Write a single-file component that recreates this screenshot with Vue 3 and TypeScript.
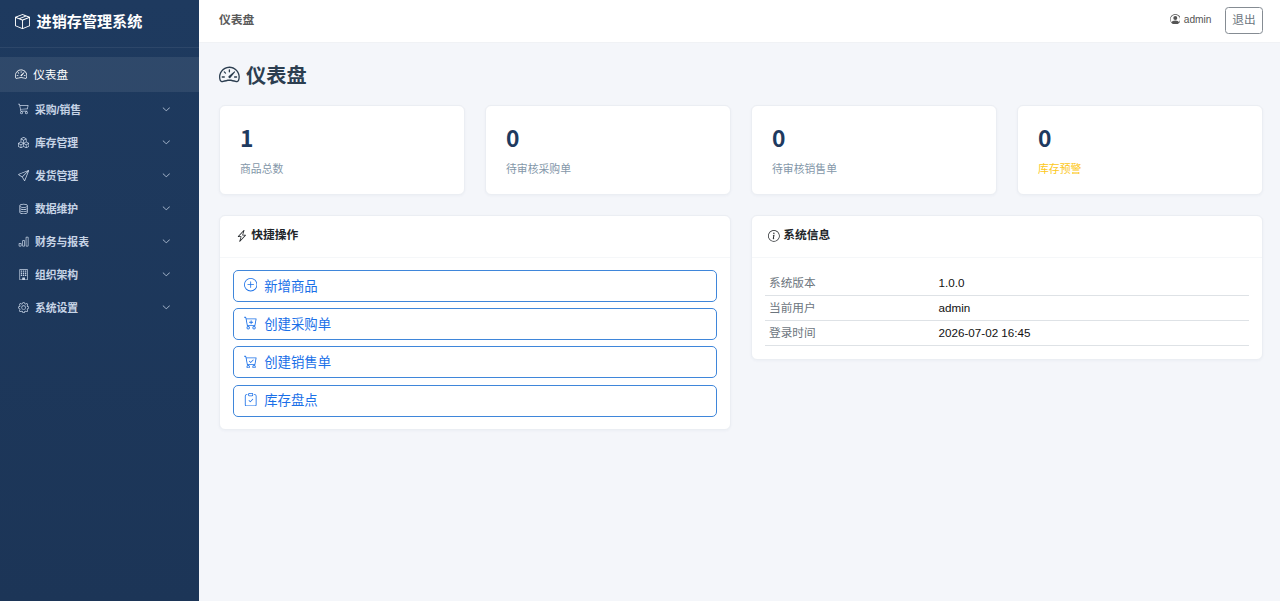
<script setup lang="ts">
interface NavGroup {
  label: string
  icon: string
}

const circle = 'M8 15A7 7 0 1 1 8 1a7 7 0 0 1 0 14m0 1A8 8 0 1 0 8 0a8 8 0 0 0 0 16'
const cartBody =
  'M.5 1a.5.5 0 0 0 0 1h1.11l.401 1.607 1.498 7.985A.5.5 0 0 0 4 12h1a2 2 0 1 0 0 4 2 2 0 0 0 0-4h7a2 2 0 1 0 0 4 2 2 0 0 0 0-4h1a.5.5 0 0 0 .491-.408l1.5-8A.5.5 0 0 0 14.5 3H2.89l-.405-1.621A.5.5 0 0 0 2 1zm3.915 10L3.102 4h10.796l-1.313 7zM6 14a1 1 0 1 1-2 0 1 1 0 0 1 2 0m7 0a1 1 0 1 1-2 0 1 1 0 0 1 2 0'

const windowPane = (x: number, y: number): string =>
  `M${x} ${y + 0.5}a.5.5 0 0 1 .5-.5h1a.5.5 0 0 1 .5.5v1a.5.5 0 0 1-.5.5h-1a.5.5 0 0 1-.5-.5z`
const windowPanes: string = [2, 5, 8]
  .map((y) => [4, 7, 10].map((x) => windowPane(x, y)).join(''))
  .join('')

const icons: Record<string, string[]> = {
  box: [
    'M8.186 1.113a.5.5 0 0 0-.372 0L1.846 3.5l2.404.961L10.404 2zm3.564 1.426L5.596 5 8 5.961 14.154 3.5zm3.25 1.7-6.5 2.6v7.922l6.5-2.6V4.24zM7.5 14.762V6.838L1 4.239v7.923zM7.443.184a1.5 1.5 0 0 1 1.114 0l7.129 2.852A.5.5 0 0 1 16 3.5v8.662a1 1 0 0 1-.629.928l-7.185 2.874a.5.5 0 0 1-.372 0L.63 13.09a1 1 0 0 1-.63-.928V3.5a.5.5 0 0 1 .314-.464z',
  ],
  speedometer: [
    'M8 4a.5.5 0 0 1 .5.5V6a.5.5 0 0 1-1 0V4.5A.5.5 0 0 1 8 4M3.732 5.732a.5.5 0 0 1 .707 0l.915.914a.5.5 0 1 1-.708.708l-.914-.915a.5.5 0 0 1 0-.707M2 10a.5.5 0 0 1 .5-.5h1.586a.5.5 0 0 1 0 1H2.5A.5.5 0 0 1 2 10m9.5 0a.5.5 0 0 1 .5-.5h1.5a.5.5 0 0 1 0 1H12a.5.5 0 0 1-.5-.5m.754-4.246a.39.39 0 0 0-.527-.02L7.547 9.31a.91.91 0 1 0 1.302 1.258l3.434-4.297a.39.39 0 0 0-.029-.518z',
    'M0 10a8 8 0 1 1 15.547 2.661c-.442 1.253-1.845 1.602-2.932 1.25C11.309 13.488 9.475 13 8 13c-1.474 0-3.31.488-4.615.911-1.087.352-2.49.003-2.932-1.25A8 8 0 0 1 0 10m8-7a7 7 0 0 0-6.603 9.329c.203.575.923.876 1.68.63C4.397 12.533 6.358 12 8 12s3.604.532 4.923.96c.757.245 1.477-.056 1.68-.631A7 7 0 0 0 8 3',
  ],
  cart: [
    'M0 1.5A.5.5 0 0 1 .5 1H2a.5.5 0 0 1 .485.379L2.89 3H14.5a.5.5 0 0 1 .49.598l-1 5a.5.5 0 0 1-.465.401l-9.397.472L4.415 11H13a.5.5 0 0 1 0 1H4a.5.5 0 0 1-.491-.408L2.01 3.607 1.61 2H.5a.5.5 0 0 1-.5-.5M3.102 4l.84 4.479 9.144-.459L13.89 4zM5 12a2 2 0 1 0 0 4 2 2 0 0 0 0-4m7 0a2 2 0 1 0 0 4 2 2 0 0 0 0-4m-7 1a1 1 0 1 1 0 2 1 1 0 0 1 0-2m7 0a1 1 0 1 1 0 2 1 1 0 0 1 0-2',
  ],
  boxes: [
    'M7.752.066a.5.5 0 0 1 .496 0l3.75 2.143a.5.5 0 0 1 .252.434v3.995l3.498 2A.5.5 0 0 1 16 9.07v4.286a.5.5 0 0 1-.252.434l-3.75 2.143a.5.5 0 0 1-.496 0l-3.502-2-3.502 2.001a.5.5 0 0 1-.496 0l-3.75-2.143A.5.5 0 0 1 0 13.357V9.071a.5.5 0 0 1 .252-.434L3.75 6.638V2.643a.5.5 0 0 1 .252-.434zM4.25 7.504 1.508 9.071l2.742 1.567 2.742-1.567zM7.5 9.933l-2.75 1.571v3.134l2.75-1.571zm1 3.134 2.75 1.571v-3.134L8.5 9.933zm.508-3.996 2.742 1.567 2.742-1.567-2.742-1.567zm2.242-2.433V3.504L8.5 5.076V8.21zM7.5 8.21V5.076L4.75 3.504v3.134zM5.258 2.643 8 4.21l2.742-1.567L8 1.076zM15 9.933l-2.75 1.571v3.134L15 13.067zM3.75 14.638v-3.134L1 9.933v3.134z',
  ],
  send: [
    'M15.854.146a.5.5 0 0 1 .11.54l-5.819 14.547a.75.75 0 0 1-1.329.124l-3.178-4.995L.643 7.184a.75.75 0 0 1 .124-1.33L15.314.037a.5.5 0 0 1 .54.11ZM6.636 10.07l2.761 4.338L14.13 2.576zm6.787-8.201L1.591 6.602l4.339 2.76z',
  ],
  database: [
    'M4.318 2.687C5.234 2.271 6.536 2 8 2s2.766.27 3.682.687C12.644 3.125 13 3.627 13 4c0 .374-.356.875-1.318 1.313C10.766 5.729 9.464 6 8 6s-2.766-.27-3.682-.687C3.356 4.875 3 4.373 3 4c0-.374.356-.875 1.318-1.313M13 5.698V7c0 .374-.356.875-1.318 1.313C10.766 8.729 9.464 9 8 9s-2.766-.27-3.682-.687C3.356 7.875 3 7.373 3 7V5.698c.271.202.58.378.904.525C4.978 6.711 6.427 7 8 7s3.022-.289 4.096-.777A5 5 0 0 0 13 5.698M14 4c0-1.007-.875-1.755-1.904-2.223C11.022 1.289 9.573 1 8 1s-3.022.289-4.096.777C2.875 2.245 2 2.993 2 4v9c0 1.007.875 1.755 1.904 2.223C4.978 15.71 6.427 16 8 16s3.022-.289 4.096-.777C13.125 14.755 14 14.007 14 13zm-1 4.698V10c0 .374-.356.875-1.318 1.313C10.766 11.729 9.464 12 8 12s-2.766-.27-3.682-.687C3.356 10.875 3 10.373 3 10V8.698c.271.202.58.378.904.525C4.978 9.71 6.427 10 8 10s3.022-.289 4.096-.777A5 5 0 0 0 13 8.698m0 3V13c0 .374-.356.875-1.318 1.313C10.766 14.729 9.464 15 8 15s-2.766-.27-3.682-.687C3.356 13.875 3 13.373 3 13v-1.302c.271.202.58.378.904.525C4.978 12.71 6.427 13 8 13s3.022-.289 4.096-.777c.324-.147.633-.323.904-.525',
  ],
  chart: [
    'M4 11H2v3h2zm5-4H7v7h2zm5-5v12h-2V2zm-2-1a1 1 0 0 0-1 1v12a1 1 0 0 0 1 1h2a1 1 0 0 0 1-1V2a1 1 0 0 0-1-1zM6 7a1 1 0 0 1 1-1h2a1 1 0 0 1 1 1v7a1 1 0 0 1-1 1H7a1 1 0 0 1-1-1zm-5 4a1 1 0 0 1 1-1h2a1 1 0 0 1 1 1v3a1 1 0 0 1-1 1H2a1 1 0 0 1-1-1z',
  ],
  building: [
    windowPanes,
    'M2 1a1 1 0 0 1 1-1h10a1 1 0 0 1 1 1v14a1 1 0 0 1-1 1H3a1 1 0 0 1-1-1zm11 0H3v14h3v-2.5a.5.5 0 0 1 .5-.5h3a.5.5 0 0 1 .5.5V15h3z',
  ],
  gear: [
    'M8 4.754a3.246 3.246 0 1 0 0 6.492 3.246 3.246 0 0 0 0-6.492M5.754 8a2.246 2.246 0 1 1 4.492 0 2.246 2.246 0 0 1-4.492 0',
    'M9.796 1.343c-.527-1.79-3.065-1.79-3.592 0l-.094.319a.873.873 0 0 1-1.255.52l-.292-.16c-1.64-.892-3.433.902-2.54 2.541l.159.292a.873.873 0 0 1-.52 1.255l-.319.094c-1.79.527-1.79 3.065 0 3.592l.319.094a.873.873 0 0 1 .52 1.255l-.16.292c-.892 1.64.901 3.434 2.541 2.54l.292-.159a.873.873 0 0 1 1.255.52l.094.319c.527 1.79 3.065 1.79 3.592 0l.094-.319a.873.873 0 0 1 1.255-.52l.292.16c1.64.893 3.434-.902 2.54-2.541l-.159-.292a.873.873 0 0 1 .52-1.255l.319-.094c1.79-.527 1.79-3.065 0-3.592l-.319-.094a.873.873 0 0 1-.52-1.255l.16-.292c.893-1.64-.902-3.433-2.541-2.54l-.292.159a.873.873 0 0 1-1.255-.52zm-2.633.283c.246-.835 1.428-.835 1.674 0l.094.319a1.873 1.873 0 0 0 2.693 1.115l.291-.16c.764-.415 1.6.42 1.184 1.185l-.159.292a1.873 1.873 0 0 0 1.116 2.692l.318.094c.835.246.835 1.428 0 1.674l-.319.094a1.873 1.873 0 0 0-1.115 2.693l.16.291c.415.764-.42 1.6-1.185 1.184l-.291-.159a1.873 1.873 0 0 0-2.693 1.116l-.094.318c-.246.835-1.428.835-1.674 0l-.094-.319a1.873 1.873 0 0 0-2.692-1.115l-.292.16c-.764.415-1.6-.42-1.184-1.185l.159-.291A1.873 1.873 0 0 0 1.945 8.93l-.319-.094c-.835-.246-.835-1.428 0-1.674l.319-.094A1.873 1.873 0 0 0 3.06 4.377l-.16-.292c-.415-.764.42-1.6 1.185-1.184l.292.159a1.873 1.873 0 0 0 2.692-1.115z',
  ],
  chevron: [
    'M1.646 4.646a.5.5 0 0 1 .708 0L8 10.293l5.646-5.647a.5.5 0 0 1 .708.708l-6 6a.5.5 0 0 1-.708 0l-6-6a.5.5 0 0 1 0-.708',
  ],
  person: [
    'M11 6a3 3 0 1 1-6 0 3 3 0 0 1 6 0',
    'M0 8a8 8 0 1 1 16 0A8 8 0 0 1 0 8m8-7a7 7 0 0 0-5.468 11.37C3.242 11.226 4.805 10 8 10s4.757 1.225 5.468 2.37A7 7 0 0 0 8 1',
  ],
  lightning: [
    'M11.251.068a.5.5 0 0 1 .227.58L9.677 6.5H13a.5.5 0 0 1 .364.843l-8 8.5a.5.5 0 0 1-.842-.49L6.323 9.5H3a.5.5 0 0 1-.364-.843l8-8.5a.5.5 0 0 1 .615-.09zM4.157 8.5H7a.5.5 0 0 1 .478.647L6.11 13.59l5.732-6.09H9a.5.5 0 0 1-.478-.647L9.89 2.41z',
  ],
  info: [
    circle,
    'm8.93 6.588-2.29.287-.082.38.45.083c.294.07.352.176.288.469l-.738 3.468c-.194.897.105 1.319.808 1.319.545 0 1.178-.252 1.465-.598l.088-.416c-.2.176-.492.246-.686.246-.275 0-.375-.193-.304-.533zM9 4.5a1 1 0 1 1-2 0 1 1 0 0 1 2 0',
  ],
  plus: [
    circle,
    'M8 4a.5.5 0 0 1 .5.5v3h3a.5.5 0 0 1 0 1h-3v3a.5.5 0 0 1-1 0v-3h-3a.5.5 0 0 1 0-1h3v-3A.5.5 0 0 1 8 4',
  ],
  cartPlus: [
    'M9 5.5a.5.5 0 0 0-1 0V7H6.5a.5.5 0 0 0 0 1H8v1.5a.5.5 0 0 0 1 0V8h1.5a.5.5 0 0 0 0-1H9z',
    cartBody,
  ],
  cartCheck: [
    'M11.354 6.354a.5.5 0 0 0-.708-.708L8 8.293 6.854 7.146a.5.5 0 1 0-.708.708l1.5 1.5a.5.5 0 0 0 .708 0z',
    cartBody,
  ],
  clipboard: [
    'M10.854 7.146a.5.5 0 0 1 0 .708l-3 3a.5.5 0 0 1-.708 0l-1.5-1.5a.5.5 0 1 1 .708-.708L7.5 9.793l2.646-2.647a.5.5 0 0 1 .708 0',
    'M4 1.5H3a2 2 0 0 0-2 2V14a2 2 0 0 0 2 2h10a2 2 0 0 0 2-2V3.5a2 2 0 0 0-2-2h-1v1h1a1 1 0 0 1 1 1V14a1 1 0 0 1-1 1H3a1 1 0 0 1-1-1V3.5a1 1 0 0 1 1-1h1z',
    'M9.5 1a.5.5 0 0 1 .5.5v1a.5.5 0 0 1-.5.5h-3a.5.5 0 0 1-.5-.5v-1a.5.5 0 0 1 .5-.5zm-3-1A1.5 1.5 0 0 0 5 1.5v1A1.5 1.5 0 0 0 6.5 4h3A1.5 1.5 0 0 0 11 2.5v-1A1.5 1.5 0 0 0 9.5 0z',
  ],
}

const groups: NavGroup[] = [
  { label: '采购/销售', icon: 'cart' },
  { label: '库存管理', icon: 'boxes' },
  { label: '发货管理', icon: 'send' },
  { label: '数据维护', icon: 'database' },
  { label: '财务与报表', icon: 'chart' },
  { label: '组织架构', icon: 'building' },
  { label: '系统设置', icon: 'gear' },
]

const stats: { value: number; label: string; warn?: boolean }[] = [
  { value: 1, label: '商品总数' },
  { value: 0, label: '待审核采购单' },
  { value: 0, label: '待审核销售单' },
  { value: 0, label: '库存预警', warn: true },
]

const actions: NavGroup[] = [
  { label: '新增商品', icon: 'plus' },
  { label: '创建采购单', icon: 'cartPlus' },
  { label: '创建销售单', icon: 'cartCheck' },
  { label: '库存盘点', icon: 'clipboard' },
]

const info: [string, string][] = [
  ['系统版本', '1.0.0'],
  ['当前用户', 'admin'],
  ['登录时间', '2026-07-02 16:45'],
]
</script>

<template>
  <div class="app">
    <aside class="sidebar">
      <div class="brand">
        <svg class="icon" viewBox="0 0 16 16"><path v-for="d in icons.box" :key="d" :d="d" /></svg>
        <span>进销存管理系统</span>
      </div>
      <nav class="nav">
        <a class="nav-active">
          <svg class="icon" viewBox="0 0 16 16"><path v-for="d in icons.speedometer" :key="d" :d="d" /></svg>
          <span>仪表盘</span>
        </a>
        <a v-for="g in groups" :key="g.label" class="nav-group">
          <svg class="icon" viewBox="0 0 16 16"><path v-for="d in icons[g.icon]" :key="d" :d="d" /></svg>
          <span>{{ g.label }}</span>
          <svg class="chevron" viewBox="0 0 16 16"><path v-for="d in icons.chevron" :key="d" :d="d" /></svg>
        </a>
      </nav>
    </aside>

    <div class="main">
      <header class="topbar">
        <span class="crumb">仪表盘</span>
        <div class="user">
          <svg class="icon" viewBox="0 0 16 16"><path v-for="d in icons.person" :key="d" :d="d" /></svg>
          <span class="user-name">admin</span>
          <button class="logout" type="button">退出</button>
        </div>
      </header>

      <main class="content">
        <h1 class="title">
          <svg class="icon" viewBox="0 0 16 16"><path v-for="d in icons.speedometer" :key="d" :d="d" /></svg>
          <span>仪表盘</span>
        </h1>

        <section class="stats">
          <div v-for="s in stats" :key="s.label" class="card stat">
            <div class="stat-value">{{ s.value }}</div>
            <div class="stat-label" :class="{ warn: s.warn }">{{ s.label }}</div>
          </div>
        </section>

        <section class="panels">
          <div class="card">
            <div class="card-head">
              <svg class="icon" viewBox="0 0 16 16"><path v-for="d in icons.lightning" :key="d" :d="d" /></svg>
              <span>快捷操作</span>
            </div>
            <div class="actions">
              <button v-for="a in actions" :key="a.label" class="action" type="button">
                <svg class="icon" viewBox="0 0 16 16"><path v-for="d in icons[a.icon]" :key="d" :d="d" /></svg>
                <span>{{ a.label }}</span>
              </button>
            </div>
          </div>

          <div class="card">
            <div class="card-head">
              <svg class="icon" viewBox="0 0 16 16"><path v-for="d in icons.info" :key="d" :d="d" /></svg>
              <span>系统信息</span>
            </div>
            <dl class="info">
              <div v-for="[k, v] in info" :key="k" class="info-row">
                <dt>{{ k }}</dt>
                <dd>{{ v }}</dd>
              </div>
            </dl>
          </div>
        </section>
      </main>
    </div>
  </div>
</template>

<style>
body {
  margin: 0;
  background: #f4f6fa;
}
</style>

<style scoped>
.app {
  display: flex;
  height: 601px;
  overflow: hidden;
  font-family: "Liberation Sans", "Noto Sans CJK SC", sans-serif;
  color: #212529;
  background: #f4f6fa;
}
.app * {
  box-sizing: border-box;
}
.icon,
.chevron {
  display: block;
  flex: none;
  width: 1em;
  height: 1em;
  fill: currentColor;
}
.sidebar {
  flex: none;
  width: 199px;
  background: linear-gradient(180deg, #1e3a5f 0%, #1c3557 100%);
}
.brand {
  display: flex;
  align-items: center;
  gap: 7px;
  height: 48px;
  padding: 0 14px 4px 14.5px;
  border-bottom: 1px solid rgba(255, 255, 255, 0.07);
  color: #fff;
  font-size: 15.1px;
  font-weight: 700;
}
.nav-active span {
  padding-bottom: 2px;
}
.brand span,
.card-head span {
  padding-bottom: 4px;
}
.nav {
  padding-top: 9px;
}
.nav-active {
  display: flex;
  align-items: center;
  gap: 6.5px;
  height: 35px;
  padding: 0 0 1px 14.5px;
  background: rgba(255, 255, 255, 0.08);
  color: #fff;
  font-size: 11.67px;
}
.nav-active .icon {
  width: 12.2px;
  height: 12.2px;
}
.nav-group {
  display: flex;
  align-items: center;
  height: 33.1px;
  padding: 1px 28px 0 17.7px;
  color: #c7d4e6;
  font-size: 10.83px;
  font-weight: 700;
}
.nav-group span {
  padding-bottom: 1px;
}
.nav-group .icon {
  width: 11.2px;
  height: 11.2px;
  margin-right: 6px;
}
.chevron {
  margin-left: auto;
  width: 8.6px;
  height: 8.6px;
}
.main {
  flex: 1;
  min-width: 0;
}
.topbar {
  display: flex;
  align-items: center;
  justify-content: space-between;
  height: 43px;
  padding: 0 17px 2px 20px;
  background: #fff;
  border-bottom: 1px solid #f0f2f5;
}
.crumb {
  padding-bottom: 3px;
  font-size: 11.8px;
  font-weight: 700;
  color: #5a5a5a;
}
.user {
  display: flex;
  align-items: center;
  gap: 3.5px;
  font-size: 10.2px;
  color: #555;
}
.user .icon {
  width: 10.6px;
  height: 10.6px;
  margin-bottom: 2px;
}
.user-name {
  padding-bottom: 2px;
}
.logout {
  width: 38px;
  height: 27px;
  margin-left: 10px;
  padding: 0 0 3px;
  border: 1px solid #858c93;
  border-radius: 3.5px;
  background: #fff;
  color: #6c757d;
  font-family: inherit;
  font-size: 11.67px;
}
.content {
  padding: 16px 17px 0 20px;
}
.title {
  display: flex;
  align-items: center;
  gap: 6.3px;
  height: 30px;
  margin: 0 0 16px;
  color: #2c3e50;
  font-size: 20.2px;
  font-weight: 700;
}
.title .icon {
  width: 20.8px;
  height: 20.8px;
}
.stats {
  display: grid;
  grid-template-columns: repeat(4, 1fr);
  gap: 20px;
}
.card {
  background: #fff;
  border: 1px solid #ebeef3;
  border-radius: 6px;
  box-shadow: 0 1px 3px rgba(30, 58, 95, 0.04);
}
.stat {
  height: 90px;
  padding: 17px 20px 0;
}
.stat-value {
  height: 30px;
  line-height: 30px;
  font-family: "Noto Sans CJK SC", sans-serif;
  font-size: 22.8px;
  font-weight: 700;
  color: #1e3a5f;
}
.stat-label {
  margin-top: 8px;
  line-height: 17px;
  font-size: 10.83px;
  color: #8497a9;
}
.stat-label.warn {
  color: #fdc820;
}
.panels {
  display: grid;
  grid-template-columns: 1fr 1fr;
  align-items: start;
  gap: 20px;
  margin-top: 20px;
}
.card-head {
  display: flex;
  align-items: center;
  gap: 3.3px;
  height: 41.5px;
  padding: 0 16.3px 1px;
  border-bottom: 1px solid #f5f7f9;
  font-size: 11.75px;
  font-weight: 700;
}
.actions {
  display: flex;
  flex-direction: column;
  gap: 6.2px;
  padding: 12.5px 13px 12.9px;
}
.action {
  display: flex;
  align-items: center;
  gap: 6.8px;
  height: 32px;
  padding: 0 10px 2px;
  border: 1px solid #3f86da;
  border-radius: 5px;
  background: #fff;
  color: #1a70e8;
  font-family: inherit;
  font-size: 13.4px;
}
.action span {
  padding-bottom: 1px;
}
.info {
  margin: 0;
  padding: 13px 13px 13.5px;
}
.info-row {
  display: grid;
  grid-template-columns: 169.5px 1fr;
  align-items: center;
  height: 25px;
  padding: 0 0 3px 4px;
  border-bottom: 1px solid #dee2e6;
  font-size: 11.67px;
}
.info-row dt {
  color: #6c757d;
}
.info-row dd {
  margin: 0;
  padding-top: 2px;
  color: #111;
}
</style>
